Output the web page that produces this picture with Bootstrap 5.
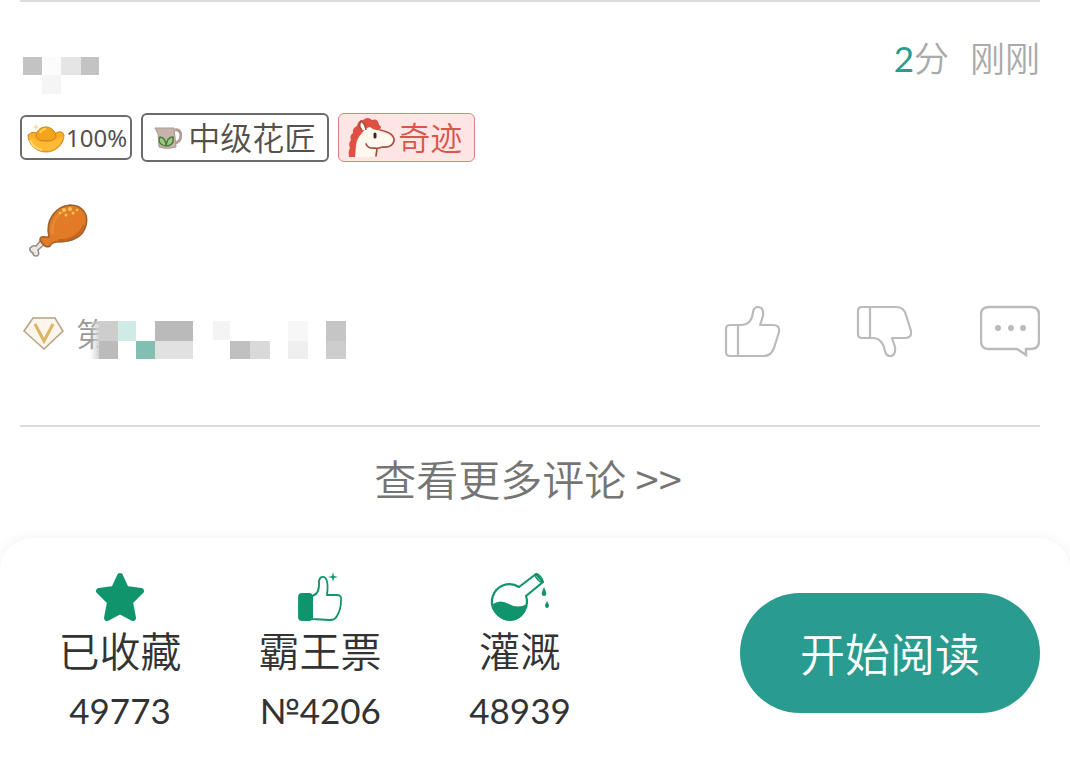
<!DOCTYPE html>
<html lang="zh-CN">
<head>
<meta charset="utf-8">
<meta name="viewport" content="width=device-width, initial-scale=1">
<title>书评</title>
<link href="https://cdn.jsdelivr.net/npm/bootstrap@5.3.0/dist/css/bootstrap.min.css" rel="stylesheet">
<style>
  body { font-family: "Noto Sans CJK SC", sans-serif; font-weight: 350; background: #fff; color: #333; }
  svg { display: block; flex: none; }
  .page-main { padding: 0 30px 0 20px; }
  .review { border-top: 2px solid #dcdcdc; border-bottom: 2px solid #dcdcdc; padding: 35px 0 65px; }
  .meta { font-size: 35px; line-height: 40px; color: #aaa; gap: 21px; }
  .score { font-family: Lato, sans-serif; font-weight: 400; color: #2a9b8c; }
  .tags { gap: 9px; margin-top: 18px; }
  .tag { border: 2px solid #6b6b6b; border-radius: 6px; height: 49px; font-size: 32px; line-height: 40px; color: #55504b; }
  .tag-text { padding-bottom: 4px; }
  .tag-gold { height: 45px; padding: 0 3px 0 4px; font-size: 24px; }
  .tag-gold span { font-family: "Noto Sans", sans-serif; font-weight: 400; }
  .tag-florist { padding: 0 11px; gap: 6px; }
  .tag-miracle { border: 1px solid #d9847f; background: #ffe6e4; color: #d8574b; padding: 0 12px 0 9px; gap: 2px; }
  .review-body { margin-top: 40px; }
  .review-foot { margin-top: 46px; }
  .chapter { font-size: 32px; line-height: 56px; color: #999; }
  .chapter-mosaic { margin-left: -18px; }
  .actions { gap: 68px; }
  .icon-btn { border: 0; background: none; padding: 0; color: #bbb; }
  .more { padding: 21px 4px 30px 0; font-size: 42px; line-height: 60px; }
  .more a { color: #757575; text-decoration: none; }
  .dock { border-radius: 32px 32px 0 0; box-shadow: 0 0 14px rgba(0,0,0,.06); padding: 34px 30px 25px 20px; background: #fff; }
  .stat { width: 200px; border: 0; background: none; padding: 0; color: #333; font-weight: 350; }
  .stat-name { font-size: 41px; line-height: 48px; margin-top: 3px; }
  .stat-num { font-family: Lato, "Noto Sans", sans-serif; font-size: 35px; line-height: 40px; font-weight: 400; margin-top: 17px; }
  .read { width: 300px; height: 120px; background: #2a9b8f; color: #fff; font-size: 45px; font-weight: 350; border: 0; }
  .read:hover { background: #238679; color: #fff; }
</style>
</head>
<body class="d-flex flex-column min-vh-100 overflow-x-hidden">
<main class="page-main">
  <article class="review">
    <header class="d-flex justify-content-between align-items-start">
      <svg width="80" height="58" role="img" aria-label="用户名已隐藏">
        <rect x="3" y="20" width="19" height="18" fill="#c3c3c3"/><rect x="22" y="20" width="20" height="18" fill="#fcfcfc"/>
        <rect x="41" y="20" width="20" height="18" fill="#e5e5e5"/><rect x="61" y="20" width="18" height="18" fill="#c3c3c3"/>
        <rect x="22" y="38" width="19" height="19" fill="#f5f5f5"/>
      </svg>
      <div class="meta d-flex"><span><span class="score">2</span>分</span><time>刚刚</time></div>
    </header>
    <div class="tags d-flex align-items-center">
      <span class="tag tag-gold d-flex align-items-center">
        <svg width="40" height="36" viewBox="0 0 40 36" aria-hidden="true">
          <path d="M2 15Q7 10 13 14H28Q36 9 38 15C38 25 29 32 20 32S2 25 2 15Z" fill="#f8ae27" stroke="#d8851c"/>
          <path d="M3 16Q20 29 37 16Q34 30 20 31Q7 29 3 16Z" fill="#fcba35"/>
          <path d="M10 17C10 10 15 7 20 7S30 11 30 17Q28 21 20 21T10 17Z" fill="#f3a41d" stroke="#cf811e"/>
          <path d="M14 13Q16 9 20 9" fill="none" stroke="#ffd25c" stroke-width="2"/><path d="M4 20Q7 28 16 30" fill="none" stroke="#ffdb6d" stroke-width="2"/>
          <path d="M10 4l1 2 2 1-2 1-1 2-1-2-2-1 2-1z" fill="#f5df9c"/>
        </svg><span>100%</span>
      </span>
      <span class="tag tag-florist d-flex align-items-center">
        <svg width="28" height="26" viewBox="0 0 28 26" aria-hidden="true">
          <path d="M21 5C29 3 29 18 20 18" fill="none" stroke="#b49d96" stroke-width="3"/>
          <path d="M1 3H20L22 22Q13 25 5 22L4 9Z" fill="#c6b4ac" stroke="#ad9790"/>
          <path d="M12 21C5 20 4 15 6 12Q12 13 12 21Q13 12 19 12C20 18 17 21 12 21Z" fill="#9cc985" stroke="#4e7b39" stroke-width="1.5"/>
        </svg><span class="tag-text">中级花匠</span>
      </span>
      <span class="tag tag-miracle d-flex align-items-center">
        <svg width="48" height="44" viewBox="0 0 48 44" aria-hidden="true">
          <path d="M8 41L9 19Q10 8 18 7Q28 6 32 16L42 20Q47 25 43 30Q39 33 29 33L28 40V41Z" fill="#fff8ee"/>
          <path d="M1 41Q0 35 2 32Q0 27 3 24Q1 20 5 17Q4 12 9 10Q10 4 15 4Q20 0 24 4Q30 2 31 9Q35 11 31 14Q26 15 22 11Q17 12 14 17Q9 22 8 29L7 41Z" fill="#de5043"/>
          <path d="M14 14Q10 10 13 5Q17 7 18 14" fill="#fff8ee" stroke="#a64b40" stroke-width="1.5"/>
          <path d="M32 14Q47 17 46 25Q44 32 35 31Q28 33 27 32Q20 33 18 28M29 33L28 40" fill="none" stroke="#a64b40" stroke-width="1.7" stroke-linecap="round"/>
          <path d="M27 18V21" stroke="#3e2723" stroke-width="3" stroke-linecap="round"/>
        </svg><span class="tag-text">奇迹</span>
      </span>
    </div>
    <div class="review-body">
      <svg width="70" height="56" viewBox="0 0 70 56" role="img" aria-label="鸡腿">
        <path d="M27 40L18 48Q20 54 16 54Q13 54 13 51Q9 49 10 46Q13 43 16 44L23 36Z" fill="#eee8e3" stroke="#9a8f8a" stroke-width="1.6"/>
        <path d="M29 35C25 18 36 4 50 3C62 3 69 12 66 23C63 36 50 40 36 40Q31 41 30 44Q25 47 20 38Q20 34 25 35Z" fill="#e17b25" stroke="#9d602d" stroke-width="1.6"/>
        <path d="M31 32C29 18 39 7 51 7C36 13 33 21 34 33Z" fill="#e88934"/><path d="M38 38Q57 39 64 23" fill="none" stroke="#c8631b" stroke-width="2"/>
        <g fill="#f9c453"><circle cx="44" cy="8" r="2"/><circle cx="50" cy="7" r="2"/><circle cx="46" cy="13" r="1.5"/><circle cx="53" cy="11" r="1.5"/><circle cx="40" cy="11" r="1.3"/><circle cx="57" cy="8" r="1.3"/></g>
      </svg>
    </div>
    <footer class="review-foot d-flex justify-content-between align-items-center">
      <div class="chapter d-flex align-items-center">
        <svg class="me-2" width="48" height="56" viewBox="0 0 48 56" role="img" aria-label="VIP">
          <path d="M13 14H35L43 27L24 45L4 27Z" fill="#fcf5eb" stroke="#b8a284" stroke-width="1.5"/>
          <path d="M15 20L24 37L33 20" fill="none" stroke="#dcb463" stroke-width="3"/>
        </svg>
        <span>第</span>
        <svg class="chapter-mosaic" width="260" height="56" aria-hidden="true">
          <defs><linearGradient id="fade"><stop offset="0" stop-color="#d0d0d0" stop-opacity="0"/><stop offset="1" stop-color="#d0d0d0"/></linearGradient></defs>
          <rect x="0" y="17" width="10" height="38" fill="url(#fade)"/>
          <g fill="#cdcdcd"><rect x="9" y="17" width="19" height="20"/></g>
          <rect x="9" y="37" width="19" height="18" fill="#bbb"/>
          <rect x="28" y="17" width="18" height="20" fill="#cfebe5"/><rect x="46" y="37" width="19" height="18" fill="#80bfb2"/>
          <rect x="65" y="17" width="38" height="20" fill="#bababa"/><rect x="65" y="37" width="38" height="18" fill="#e1e1e1"/>
          <rect x="123" y="17" width="17" height="19" fill="#f4f4f4"/><rect x="140" y="37" width="20" height="18" fill="#c0c0c0"/><rect x="160" y="37" width="20" height="18" fill="#d9d9d9"/>
          <rect x="198" y="17" width="20" height="20" fill="#f7f7f7"/><rect x="198" y="37" width="20" height="18" fill="#efefef"/>
          <rect x="236" y="17" width="20" height="20" fill="#c5c5c5"/><rect x="236" y="37" width="20" height="18" fill="#cdcdcd"/>
        </svg>
      </div>
      <div class="actions d-flex">
        <button class="icon-btn" type="button" aria-label="赞">
          <svg width="60" height="56" viewBox="0 0 60 56" fill="none" stroke="currentColor" stroke-width="2.2" stroke-linejoin="round">
            <path d="M14 21H6Q2 21 2 25V48Q2 52 6 52H40Q47 52 50 44L55 28Q56 21 49 21H36L39 12Q40 3 34 3Q30 3 29 8Q28 20 18 21H14V52"/>
          </svg>
        </button>
        <button class="icon-btn" type="button" aria-label="踩">
          <svg width="60" height="56" viewBox="0 0 60 56" fill="none" stroke="currentColor" stroke-width="2.2" stroke-linejoin="round">
            <path d="M18 34H10Q6 34 6 30V7Q6 3 10 3H44Q52 3 54 11L59 27Q60 34 53 34H40L43 43Q44 52 38 52Q34 52 33 47Q31 35 22 34H18V3"/>
          </svg>
        </button>
        <button class="icon-btn" type="button" aria-label="回复">
          <svg width="60" height="56" viewBox="0 0 60 56" fill="none" stroke="currentColor" stroke-width="2.4">
            <path d="M9 3H51Q59 3 59 11V37Q59 45 51 45H46V51L37 45H9Q1 45 1 37V11Q1 3 9 3Z"/>
            <g fill="currentColor" stroke="none"><circle cx="18" cy="24" r="3"/><circle cx="31" cy="24" r="3"/><circle cx="43" cy="24" r="3"/></g>
          </svg>
        </button>
      </div>
    </footer>
  </article>
  <div class="more text-center"><a href="#">查看更多评论 &gt;&gt;</a></div>
</main>
<nav class="dock flex-grow-1 d-flex justify-content-between align-items-start">
  <div class="d-flex">
    <button class="stat" type="button">
      <svg class="mx-auto" width="50" height="50" viewBox="0 0 50 50" aria-hidden="true">
        <path d="M25 4L31 17L46 19L35 30L38 46L25 39L12 46L15 30L4 19L19 17Z" fill="#10946c" stroke="#10946c" stroke-width="6" stroke-linejoin="round"/>
      </svg>
      <div class="stat-name">已收藏</div><div class="stat-num">49773</div>
    </button>
    <button class="stat" type="button">
      <svg class="mx-auto" width="50" height="50" viewBox="0 0 50 50" fill="none" stroke="#10946c" stroke-width="1.8" stroke-linejoin="round" aria-hidden="true">
        <rect x="4" y="22" width="13" height="26" rx="3" fill="#10946c"/>
        <path d="M17 24Q25 22 24 9Q25 4 29 5Q34 7 32 23H42Q47 23 46 29Q46 37 42 44Q40 48 35 48L17 47Z"/>
        <path d="M38 0L39 4L43 5L39 6L38 10L37 6L33 5L37 4Z" fill="#10946c" stroke="none"/>
      </svg>
      <div class="stat-name">霸王票</div><div class="stat-num">№4206</div>
    </button>
    <button class="stat" type="button">
      <svg class="mx-auto" width="60" height="50" viewBox="0 0 60 50" fill="none" stroke="#10946c" stroke-width="2.2" stroke-linejoin="round" aria-hidden="true">
        <path d="M29 15A17.5 17.5 0 1 0 36 24L53 10L46 2Z"/>
        <ellipse cx="49" cy="6" rx="2" ry="5" transform="rotate(-40 49 6)" stroke-width="1.6"/>
        <path d="M3 32Q10 27 19 32T37 32A17 17 0 0 1 3 32Z" fill="#10946c" stroke="none"/>
        <path d="M54 15L56 20Q57 24 54 24T52 20ZM57 29L59 33Q59 36 57 36T55 33Z" fill="#10946c" stroke="none"/>
      </svg>
      <div class="stat-name">灌溉</div><div class="stat-num">48939</div>
    </button>
  </div>
  <button class="read btn rounded-pill align-self-center" type="button">开始阅读</button>
</nav>
<script src="https://cdn.jsdelivr.net/npm/bootstrap@5.3.0/dist/js/bootstrap.bundle.min.js"></script>
</body>
</html>
